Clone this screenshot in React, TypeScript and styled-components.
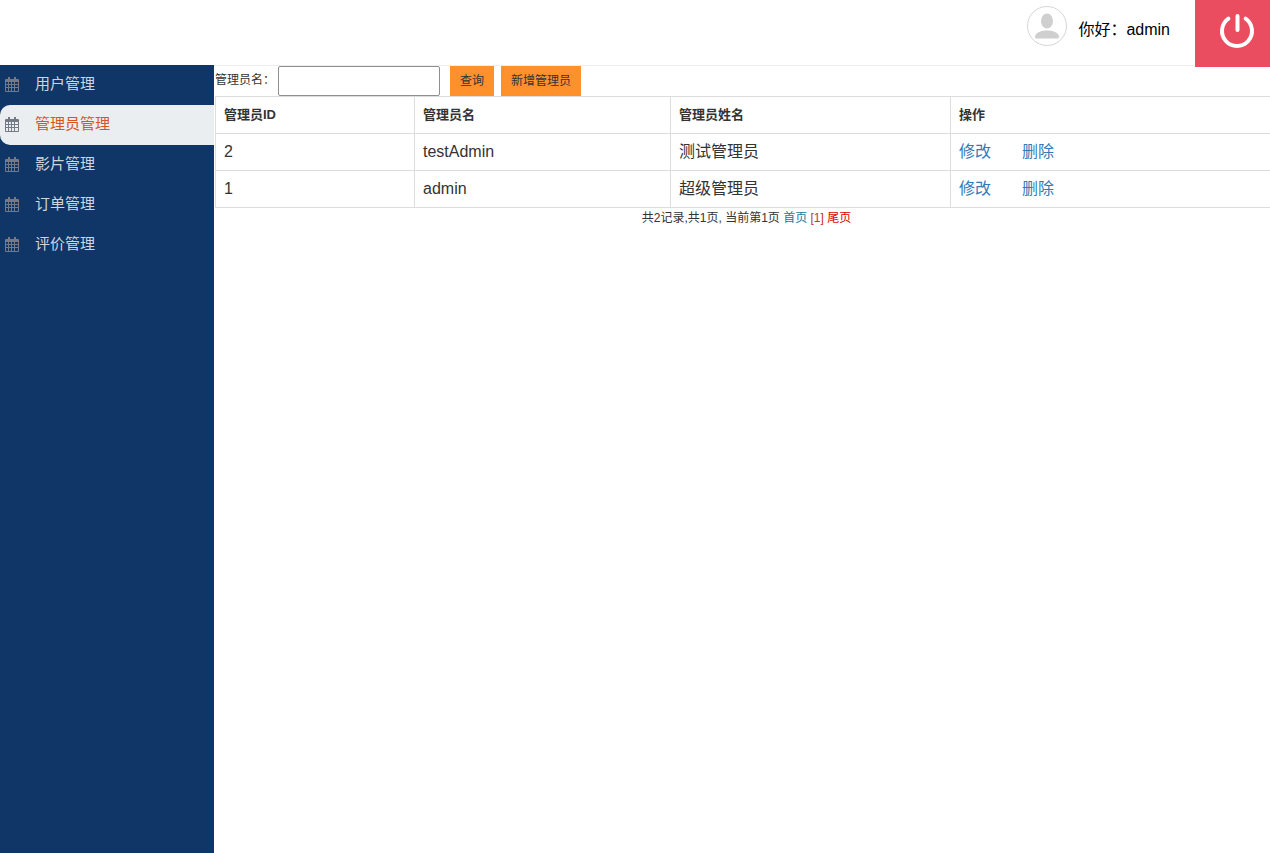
import React from 'react';
import styled, { createGlobalStyle } from 'styled-components';

const GlobalStyle = createGlobalStyle`
  html, body {
    margin: 0;
    padding: 0;
    height: 100%;
    background: #fff;
    font-family: "Liberation Sans", "Noto Sans CJK SC", sans-serif;
    color: #333;
  }
`;

const Page = styled.div`
  width: 1270px;
  height: 853px;
  overflow: hidden;
  display: flex;
  flex-direction: column;
`;

const Header = styled.header`
  height: 65px;
  flex: none;
  box-sizing: content-box;
  border-bottom: 1px solid #eee;
  display: flex;
  justify-content: flex-end;
  align-items: flex-start;
`;

const Avatar = styled.svg`
  width: 40px;
  height: 40px;
  margin: 6px 11px 0 0;
`;

const Greeting = styled.span`
  font-size: 16px;
  line-height: 59px;
  color: #000;
  margin-right: 25px;
`;

const PowerButton = styled.a`
  box-sizing: border-box;
  width: 75px;
  height: 67px;
  flex: none;
  position: relative;
  z-index: 1;
  padding: 0 0 5px 9px;
  background: #ea4c60;
  display: flex;
  align-items: center;
  justify-content: center;
`;

const Body = styled.div`
  flex: 1;
  display: flex;
  margin-top: -1px;
  min-height: 0;
`;

const Sidebar = styled.nav`
  width: 214px;
  flex: none;
  background: #103667;
`;

const NavItem = styled.a<{ $active?: boolean }>`
  box-sizing: border-box;
  height: 40px;
  padding-bottom: 6px;
  display: flex;
  align-items: center;
  font-size: 15px;
  color: ${p => (p.$active ? '#d9541e' : '#d0d5dc')};
  background: ${p => (p.$active ? '#ebeef0' : 'transparent')};
  border-radius: ${p => (p.$active ? '10px 0 0 10px' : '0')};
`;

const NavIcon = styled.svg`
  width: 14px;
  height: 15px;
  margin: 4px 16px 0 5px;
  flex: none;
`;

const Main = styled.main`
  flex: 1;
  min-width: 0;
  padding-left: 1px;
`;

const Toolbar = styled.form`
  height: 30px;
  margin: 1px 0 0 0;
  display: flex;
  align-items: flex-start;
  font-size: 12px;
`;

const Label = styled.label`
  width: 63px;
  line-height: 28px;
  color: #333;
  white-space: nowrap;
`;

const SearchInput = styled.input`
  box-sizing: border-box;
  width: 162px;
  height: 30px;
  margin: 0 10px 0 0;
  border: 1px solid #8f8f8f;
  border-radius: 2px;
  background: #fff;
  padding: 0 4px;
`;

const ActionButton = styled.button`
  box-sizing: border-box;
  height: 30px;
  margin: 0 7px 0 0;
  padding: 0 10px 3px;
  border: none;
  background: #ff912c;
  color: #333;
  font: inherit;
  font-size: 12px;
`;

const Table = styled.table`
  width: 1055px;
  border-collapse: collapse;
  table-layout: fixed;
  margin-left: 0;
`;

const Cell = styled.td`
  box-sizing: border-box;
  height: 37px;
  padding: 0 8px;
  border: 1px solid #ddd;
  border-right: none;
  font-size: 16px;
  line-height: 20px;
  color: #333;
`;

const HeadCell = styled(Cell).attrs({ as: 'th' })`
  font-size: 13px;
  font-weight: bold;
  text-align: left;
`;

const TableLink = styled.a<{ $gap?: boolean }>`
  color: #337ab7;
  font-size: 16px;
  margin-left: ${p => (p.$gap ? '31px' : '0')};
`;

const Pager = styled.div`
  width: 1063px;
  text-align: center;
  font-size: 12px;
  line-height: 20px;
  color: #333;
`;

const PagerLink = styled.a<{ $color: string }>`
  color: ${p => p.$color};
`;

const CalendarIcon = () => (
  <NavIcon viewBox="0 0 14 15">
    <path
      fill="#737a85"
      fillRule="evenodd"
      d="M1 2h2V0h2v2h4V0h2v2h2a1 1 0 0 1 1 1v11a1 1 0 0 1-1 1H1a1 1 0 0 1-1-1V3a1 1 0 0 1 1-1zm0 3v2h2V5zm3 0v2h2V5zm3 0v2h2V5zm3 0v2h3V5zM1 8v2h2V8zm3 0v2h2V8zm3 0v2h2V8zm3 0v2h3V8zM1 11v3h2v-3zm3 0v3h2v-3zm3 0v3h2v-3zm3 0v3h3v-3z"
    />
  </NavIcon>
);

const navItems = ['用户管理', '管理员管理', '影片管理', '订单管理', '评价管理'];

const admins = [
  { id: 2, name: 'testAdmin', realName: '测试管理员' },
  { id: 1, name: 'admin', realName: '超级管理员' },
];

const App = () => {
  return (
    <Page>
      <GlobalStyle />
      <Header>
        <Avatar viewBox="0 0 40 40">
          <circle cx="20" cy="20" r="19.5" fill="#fff" stroke="#d5d5d5" />
          <ellipse cx="20" cy="15" rx="6" ry="7.5" fill="#cfcfcf" />
          <path d="M8 31c0-5 7-6.5 12-6.5S32 26 32 31c0 1-1 1.5-2 1.5H10c-1 0-2-.5-2-1.5z" fill="#cfcfcf" />
        </Avatar>
        <Greeting>你好：admin</Greeting>
        <PowerButton>
          <svg width="36" height="36" viewBox="0 0 36 36" fill="none" stroke="#fff" strokeLinecap="round">
            <path d="M9.4 5.7A15 15 0 1 0 26.6 5.7" strokeWidth="4" />
            <path d="M18.5 3v14" strokeWidth="4" />
          </svg>
        </PowerButton>
      </Header>
      <Body>
        <Sidebar>
          {navItems.map(item => (
            <NavItem key={item} $active={item === '管理员管理'}>
              <CalendarIcon />
              {item}
            </NavItem>
          ))}
        </Sidebar>
        <Main>
          <Toolbar>
            <Label>管理员名：</Label>
            <SearchInput />
            <ActionButton type="button">查询</ActionButton>
            <ActionButton type="button">新增管理员</ActionButton>
          </Toolbar>
          <Table>
            <colgroup>
              <col width="199" />
              <col width="256" />
              <col width="280" />
              <col width="320" />
            </colgroup>
            <thead>
              <tr>
                <HeadCell>管理员ID</HeadCell>
                <HeadCell>管理员名</HeadCell>
                <HeadCell>管理员姓名</HeadCell>
                <HeadCell>操作</HeadCell>
              </tr>
            </thead>
            <tbody>
              {admins.map(admin => (
                <tr key={admin.id}>
                  <Cell>{admin.id}</Cell>
                  <Cell>{admin.name}</Cell>
                  <Cell>{admin.realName}</Cell>
                  <Cell>
                    <TableLink>修改</TableLink>
                    <TableLink $gap>删除</TableLink>
                  </Cell>
                </tr>
              ))}
            </tbody>
          </Table>
          <Pager>
            共2记录,共1页, 当前第1页 <PagerLink $color="#0a7f9e">首页</PagerLink>{' '}
            <PagerLink $color="#c9302c">[1]</PagerLink> <PagerLink $color="#e00000">尾页</PagerLink>
          </Pager>
        </Main>
      </Body>
    </Page>
  );
};

export default App;
